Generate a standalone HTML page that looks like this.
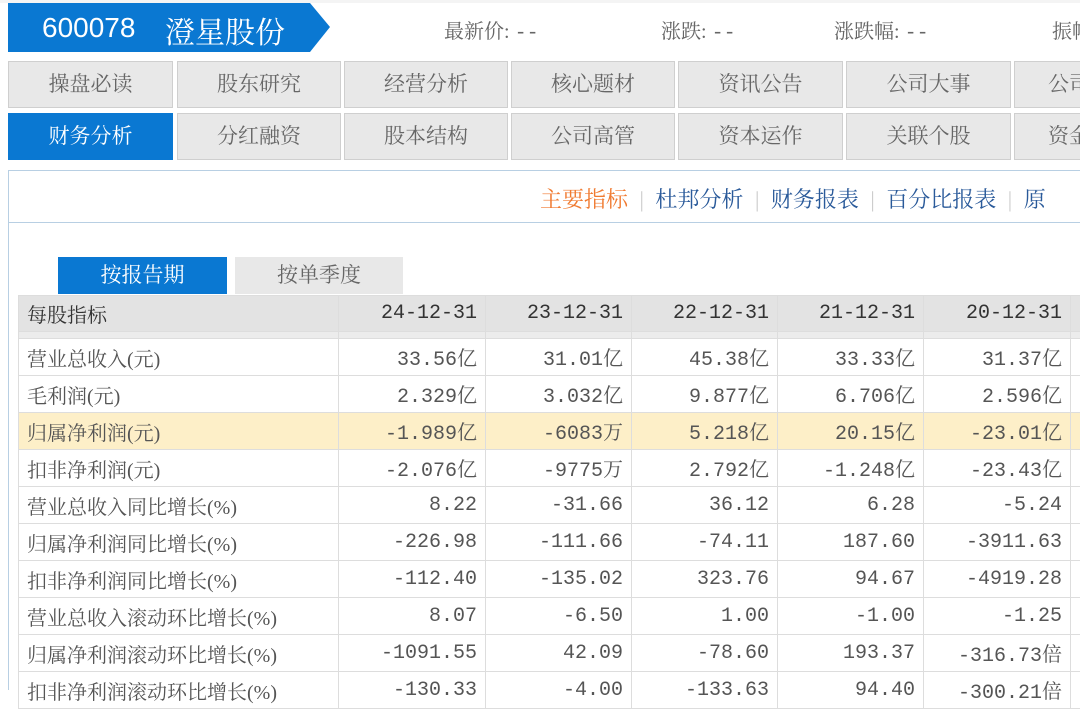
<!DOCTYPE html>
<html><head><meta charset="utf-8"><style>
*{margin:0;padding:0;box-sizing:border-box}
body{width:1080px;height:683px;overflow:hidden;background:#fff;font-family:"Liberation Serif","Noto Serif CJK SC",serif;color:#555;position:relative}
.a{position:absolute;white-space:nowrap}
.hdr{left:8px;top:3px;width:322px;height:49px;background:#0a78d2;clip-path:polygon(0 0,302px 0,322px 24px,302px 49px,0 49px)}
.nav{position:absolute;height:47px;background:#e8e8e8;border:1px solid #cfcfcf;text-align:center;line-height:45px;font-size:21px;color:#666;white-space:nowrap;overflow:hidden}
.nav.on{background:#0a78d2;color:#fff;border-color:#0a78d2}
table{position:absolute;left:18px;top:295px;border-collapse:collapse;font-size:20px;table-layout:fixed;width:1200px;font-family:"Liberation Mono","Noto Serif CJK SC",monospace}
td{border:1px solid #ddd;height:37px;padding:0 8px;text-align:right;white-space:nowrap;overflow:hidden}
td:first-child{text-align:left;font-family:"Liberation Serif","Noto Serif CJK SC",serif}
tr.h td{background:#e3e3e3;color:#333;height:36px}
tr.g td{background:#ececec;height:7px;padding:0}
tr.y td{background:#fdefc8}
.m{font-family:"Liberation Mono","Noto Serif CJK SC",monospace}
</style></head><body>
<div class="a hdr"></div>
<div class="a" style="left:42px;top:12px;font-size:28px;color:#fff;font-family:'Liberation Sans',sans-serif">600078</div>
<div class="a" style="left:165px;top:8px;font-size:30px;color:#fff">澄星股份</div>
<div class="a" style="left:444px;top:15px;font-size:20px;color:#666">最新价: <span class="m">--</span></div>
<div class="a" style="left:661px;top:15px;font-size:20px;color:#666">涨跌: <span class="m">--</span></div>
<div class="a" style="left:834px;top:15px;font-size:20px;color:#666">涨跌幅: <span class="m">--</span></div>
<div class="a" style="left:1052px;top:15px;font-size:20px;color:#666">振幅</div>
<div class="a" style="left:0;top:0;width:1080px;height:3px;background:#f4f4f4"></div>

<div class="nav" style="left:8px;top:61px;width:165px">操盘必读</div>
<div class="nav" style="left:177px;top:61px;width:164px">股东研究</div>
<div class="nav" style="left:344px;top:61px;width:164px">经营分析</div>
<div class="nav" style="left:511px;top:61px;width:164px">核心题材</div>
<div class="nav" style="left:678px;top:61px;width:165px">资讯公告</div>
<div class="nav" style="left:846px;top:61px;width:165px">公司大事</div>
<div class="nav" style="left:1014px;top:61px;width:165px;text-align:left;padding-left:33px">公司</div>
<div class="nav on" style="left:8px;top:113px;width:165px">财务分析</div>
<div class="nav" style="left:177px;top:113px;width:164px">分红融资</div>
<div class="nav" style="left:344px;top:113px;width:164px">股本结构</div>
<div class="nav" style="left:511px;top:113px;width:164px">公司高管</div>
<div class="nav" style="left:678px;top:113px;width:165px">资本运作</div>
<div class="nav" style="left:846px;top:113px;width:165px">关联个股</div>
<div class="nav" style="left:1014px;top:113px;width:165px;text-align:left;padding-left:33px">资金</div>

<div class="a" style="left:8px;top:170px;width:1080px;height:520px;border-left:1px solid #b8cfe3;border-top:1px solid #b8cfe3"></div>
<div class="a" style="left:9px;top:222px;width:1071px;height:1px;background:#b8cfe3"></div>
<div class="a" style="left:540px;top:183px;font-size:22px;color:#2a5a9a;word-spacing:6px"><span style="color:#f07a30">主要指标</span> <span style="color:#ccc">|</span> 杜邦分析 <span style="color:#ccc">|</span> 财务报表 <span style="color:#ccc">|</span> 百分比报表 <span style="color:#ccc">|</span> 原</div>

<div class="a" style="left:58px;top:257px;width:169px;height:37px;background:#0a78d2;color:#fff;font-size:21px;text-align:center;line-height:36px">按报告期</div>
<div class="a" style="left:235px;top:257px;width:168px;height:37px;background:#e8e8e8;color:#666;font-size:21px;text-align:center;line-height:36px">按单季度</div>

<table>
<colgroup><col style="width:320px"><col style="width:147px"><col style="width:146px"><col style="width:146px"><col style="width:146px"><col style="width:147px"><col style="width:148px"></colgroup>
<tr class="h"><td>每股指标</td><td>24-12-31</td><td>23-12-31</td><td>22-12-31</td><td>21-12-31</td><td>20-12-31</td><td></td></tr>
<tr class="g"><td></td><td></td><td></td><td></td><td></td><td></td><td></td></tr>
<tr><td>营业总收入(元)</td><td>33.56亿</td><td>31.01亿</td><td>45.38亿</td><td>33.33亿</td><td>31.37亿</td><td></td></tr>
<tr><td>毛利润(元)</td><td>2.329亿</td><td>3.032亿</td><td>9.877亿</td><td>6.706亿</td><td>2.596亿</td><td></td></tr>
<tr class="y"><td>归属净利润(元)</td><td>-1.989亿</td><td>-6083万</td><td>5.218亿</td><td>20.15亿</td><td>-23.01亿</td><td></td></tr>
<tr><td>扣非净利润(元)</td><td>-2.076亿</td><td>-9775万</td><td>2.792亿</td><td>-1.248亿</td><td>-23.43亿</td><td></td></tr>
<tr><td>营业总收入同比增长(%)</td><td>8.22</td><td>-31.66</td><td>36.12</td><td>6.28</td><td>-5.24</td><td></td></tr>
<tr><td>归属净利润同比增长(%)</td><td>-226.98</td><td>-111.66</td><td>-74.11</td><td>187.60</td><td>-3911.63</td><td></td></tr>
<tr><td>扣非净利润同比增长(%)</td><td>-112.40</td><td>-135.02</td><td>323.76</td><td>94.67</td><td>-4919.28</td><td></td></tr>
<tr><td>营业总收入滚动环比增长(%)</td><td>8.07</td><td>-6.50</td><td>1.00</td><td>-1.00</td><td>-1.25</td><td></td></tr>
<tr><td>归属净利润滚动环比增长(%)</td><td>-1091.55</td><td>42.09</td><td>-78.60</td><td>193.37</td><td>-316.73倍</td><td></td></tr>
<tr><td>扣非净利润滚动环比增长(%)</td><td>-130.33</td><td>-4.00</td><td>-133.63</td><td>94.40</td><td>-300.21倍</td><td></td></tr>
</table>
</body></html>
